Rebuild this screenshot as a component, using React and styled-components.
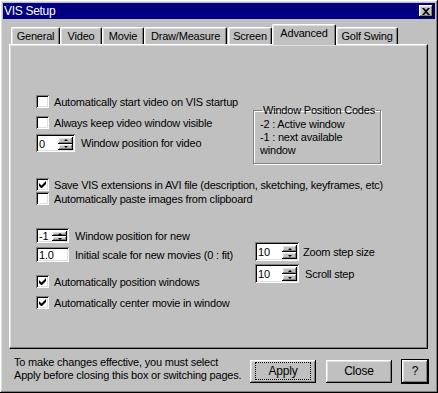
import React from 'react';
import styled, { createGlobalStyle } from 'styled-components';

const GlobalStyle = createGlobalStyle`
  body {
    margin: 0;
    background: #c0c0c0;
    font-family: "Liberation Sans", Arial, sans-serif;
    font-size: 11px;
    letter-spacing: -0.2px;
    color: #000;
  }
`;

const raised = `
  box-shadow: inset -1px -1px #000, inset 1px 1px #fff,
    inset -2px -2px #808080, inset 2px 2px #dfdfdf;
`;

const sunken = `
  box-shadow: inset 1px 1px #808080, inset -1px -1px #fff,
    inset 2px 2px #000, inset -2px -2px #dfdfdf;
`;

const Window = styled.div`
  width: 438px;
  height: 393px;
  box-sizing: border-box;
  padding: 3px;
  background: #c0c0c0;
  display: flex;
  flex-direction: column;
  ${raised}
`;

const TitleBar = styled.div`
  height: 16px;
  background: #000080;
  color: #fff;
  display: flex;
  align-items: center;
  justify-content: space-between;
  padding: 0 2px 0 1px;
  font-size: 12px;
  letter-spacing: -0.3px;
`;

const CloseButton = styled.div`
  width: 14px;
  height: 12px;
  background: #c0c0c0;
  color: #000;
  display: flex;
  align-items: center;
  justify-content: center;
  ${raised}
`;

const TabRow = styled.div`
  display: flex;
  align-items: flex-end;
  height: 22px;
  margin: 3px 0 0 8px;
  position: relative;
  z-index: 1;
`;

const Tab = styled.div`
  width: ${({ w }) => w}px;
  margin-left: ${({ gap }) => gap || 0}px;
  height: ${({ active }) => (active ? 21 : 17)}px;
  margin-bottom: ${({ active }) => (active ? -1 : 0)}px;
  box-sizing: border-box;
  background: #c0c0c0;
  border-top: 1px solid #fff;
  border-left: 1px solid #fff;
  border-right: 1px solid #000;
  border-radius: 2px 2px 0 0;
  box-shadow: inset -1px 0 #808080, inset 1px 1px #dfdfdf;
  display: flex;
  justify-content: center;
  padding-top: 2px;
`;

const Panel = styled.div`
  height: 305px;
  margin: 0 7px 0 6px;
  box-sizing: border-box;
  border-top: 1px solid #fff;
  border-left: 1px solid #fff;
  border-right: 1px solid #000;
  border-bottom: 1px solid #000;
  box-shadow: inset -1px -1px #808080, inset 1px 1px #dfdfdf;
  padding: 50px 0 0 26px;
  display: flex;
  flex-direction: column;
`;

const Section = styled.div`
  display: flex;
  align-items: flex-start;
  margin-top: ${({ top }) => top || 0}px;
`;

const Column = styled.div`
  display: flex;
  flex-direction: column;
  width: ${({ w }) => (w ? `${w}px` : 'auto')};
  padding-top: ${({ top }) => top || 0}px;
  gap: ${({ gap }) => gap || 0}px;
`;

const Row = styled.div`
  display: flex;
  align-items: center;
  height: ${({ h }) => h || 13}px;
  margin-top: ${({ top }) => top || 0}px;
  white-space: nowrap;
`;

const Box = styled.div`
  width: 13px;
  height: 13px;
  flex: none;
  box-sizing: border-box;
  background: #fff;
  margin-right: 5px;
  display: flex;
  align-items: center;
  justify-content: center;
  ${sunken}
`;

const Label = styled.span`
  margin-left: ${({ gap }) => gap || 0}px;
`;

const Field = styled.div`
  width: ${({ w }) => w}px;
  height: ${({ h }) => h}px;
  flex: none;
  box-sizing: border-box;
  background: #fff;
  display: flex;
  align-items: center;
  padding: 1px 2px 0 3px;
  ${sunken}
`;

const FieldText = styled.span`
  flex: 1;
`;

const Spin = styled.div`
  width: 15px;
  height: calc(100% - 4px);
  display: flex;
  flex-direction: column;
`;

const SpinHalf = styled.div`
  flex: 1;
  background: #c0c0c0;
  display: flex;
  align-items: center;
  justify-content: center;
  ${raised}
`;

const Arrow = styled.span`
  width: 0;
  height: 0;
  border-left: 2px solid transparent;
  border-right: 2px solid transparent;
  ${({ down }) => (down ? 'border-top: 2px solid #000;' : 'border-bottom: 2px solid #000;')}
`;

const GroupBox = styled.fieldset`
  margin: 9px 0 0 0;
  padding: 2px 0 0 6px;
  width: 128px;
  min-width: 0;
  height: 60px;
  box-sizing: border-box;
  border: 1px solid #808080;
  box-shadow: 1px 1px #fff, inset 1px 1px #fff;
  line-height: 13px;
  white-space: nowrap;

  legend {
    padding: 0 1px;
    margin-left: 2px;
    line-height: 12px;
  }
`;

const Footer = styled.div`
  display: flex;
  align-items: center;
  flex: 1;
  padding: 0 7px 0 11px;
`;

const Note = styled.div`
  line-height: 13px;
  margin-top: -2px;
  white-space: nowrap;
`;

const Buttons = styled.div`
  margin-left: auto;
  display: flex;
  gap: 10px;
  margin-top: 3px;
`;

const Button = styled.div`
  width: ${({ w }) => w}px;
  height: 23px;
  box-sizing: border-box;
  background: #c0c0c0;
  display: flex;
  align-items: center;
  justify-content: center;
  font-size: 12px;
  ${raised}
  ${({ isDefault }) => isDefault && 'outline: 1px solid #000; box-shadow: inset -1px -1px #000, inset 1px 1px #fff, inset -2px -2px #808080, inset 2px 2px #dfdfdf, 1px 1px #000;'}
`;

const Focus = styled.span`
  border: 1px dotted #000;
  padding: 1px 12px;
`;

const Check = () => (
  <svg width="7" height="7" viewBox="0 0 7 7">
    <path d="M0 2v3l2 2h1l4-4V0L2.5 4.5z" fill="#000" />
  </svg>
);

const CheckRow = ({ checked, label, top }) => (
  <Row top={top}>
    <Box>{checked && <Check />}</Box>
    <Label>{label}</Label>
  </Row>
);

const Spinner = ({ value, w, h, label, gap, top }) => (
  <Row h={h} top={top}>
    <Field w={w} h={h}>
      <FieldText>{value}</FieldText>
      <Spin>
        <SpinHalf><Arrow /></SpinHalf>
        <SpinHalf><Arrow down /></SpinHalf>
      </Spin>
    </Field>
    <Label gap={gap}>{label}</Label>
  </Row>
);

const tabs = [
  { name: 'General', w: 49 },
  { name: 'Video', w: 42 },
  { name: 'Movie', w: 42 },
  { name: 'Draw/Measure', w: 83 },
  { name: 'Screen', w: 44, gap: 1 },
  { name: 'Advanced', w: 64, active: true },
  { name: 'Golf Swing', w: 62 },
];

const App = () => (
  <Window>
    <GlobalStyle />
    <TitleBar>
      <span>VIS Setup</span>
      <CloseButton>
        <svg width="8" height="7" viewBox="0 0 8 7">
          <path d="M0 0h2l2 2 2-2h2L5 3.5 8 7H6L4 5 2 7H0l3-3.5z" fill="#000" />
        </svg>
      </CloseButton>
    </TitleBar>

    <TabRow>
      {tabs.map((t) => (
        <Tab key={t.name} w={t.w} gap={t.gap} active={t.active}>{t.name}</Tab>
      ))}
    </TabRow>

    <Panel>
      <Section>
        <Column w={217}>
          <CheckRow label="Automatically start video on VIS startup" />
          <CheckRow top={8} label="Always keep video window visible" />
          <Spinner top={5} value="0" w={39} h={18} gap={6} label="Window position for video" />
        </Column>
        <GroupBox>
          <legend>Window Position Codes</legend>
          -2 : Active window
          <br />
          -1 : next available
          <br />
          window
        </GroupBox>
      </Section>

      <Section top={14}>
        <Column>
          <CheckRow checked label="Save VIS extensions in AVI file (description, sketching, keyframes, etc)" />
          <CheckRow top={1} label="Automatically paste images from clipboard" />
        </Column>
      </Section>

      <Section top={23}>
        <Column w={219}>
          <Spinner value="-1" w={33} h={15} gap={6} label="Window position for new" />
          <Row h={15} top={4}>
            <Field w={33} h={15}>
              <FieldText>1.0</FieldText>
            </Field>
            <Label gap={6}>Initial scale for new movies (0 : fit)</Label>
          </Row>
          <CheckRow checked top={13} label="Automatically position windows" />
          <CheckRow checked top={8} label="Automatically center movie in window" />
        </Column>
        <Column top={14} gap={3}>
          <Spinner value="10" w={44} h={19} gap={4} label="Zoom step size" />
          <Spinner value="10" w={44} h={19} gap={6} label="Scroll step" />
        </Column>
      </Section>
    </Panel>

    <Footer>
      <Note>
        To make changes effective, you must select
        <br />
        Apply before closing this box or switching pages.
      </Note>
      <Buttons>
        <Button w={66}><Focus>Apply</Focus></Button>
        <Button w={66}>Close</Button>
        <Button w={26} isDefault>?</Button>
      </Buttons>
    </Footer>
  </Window>
);

export default App;
